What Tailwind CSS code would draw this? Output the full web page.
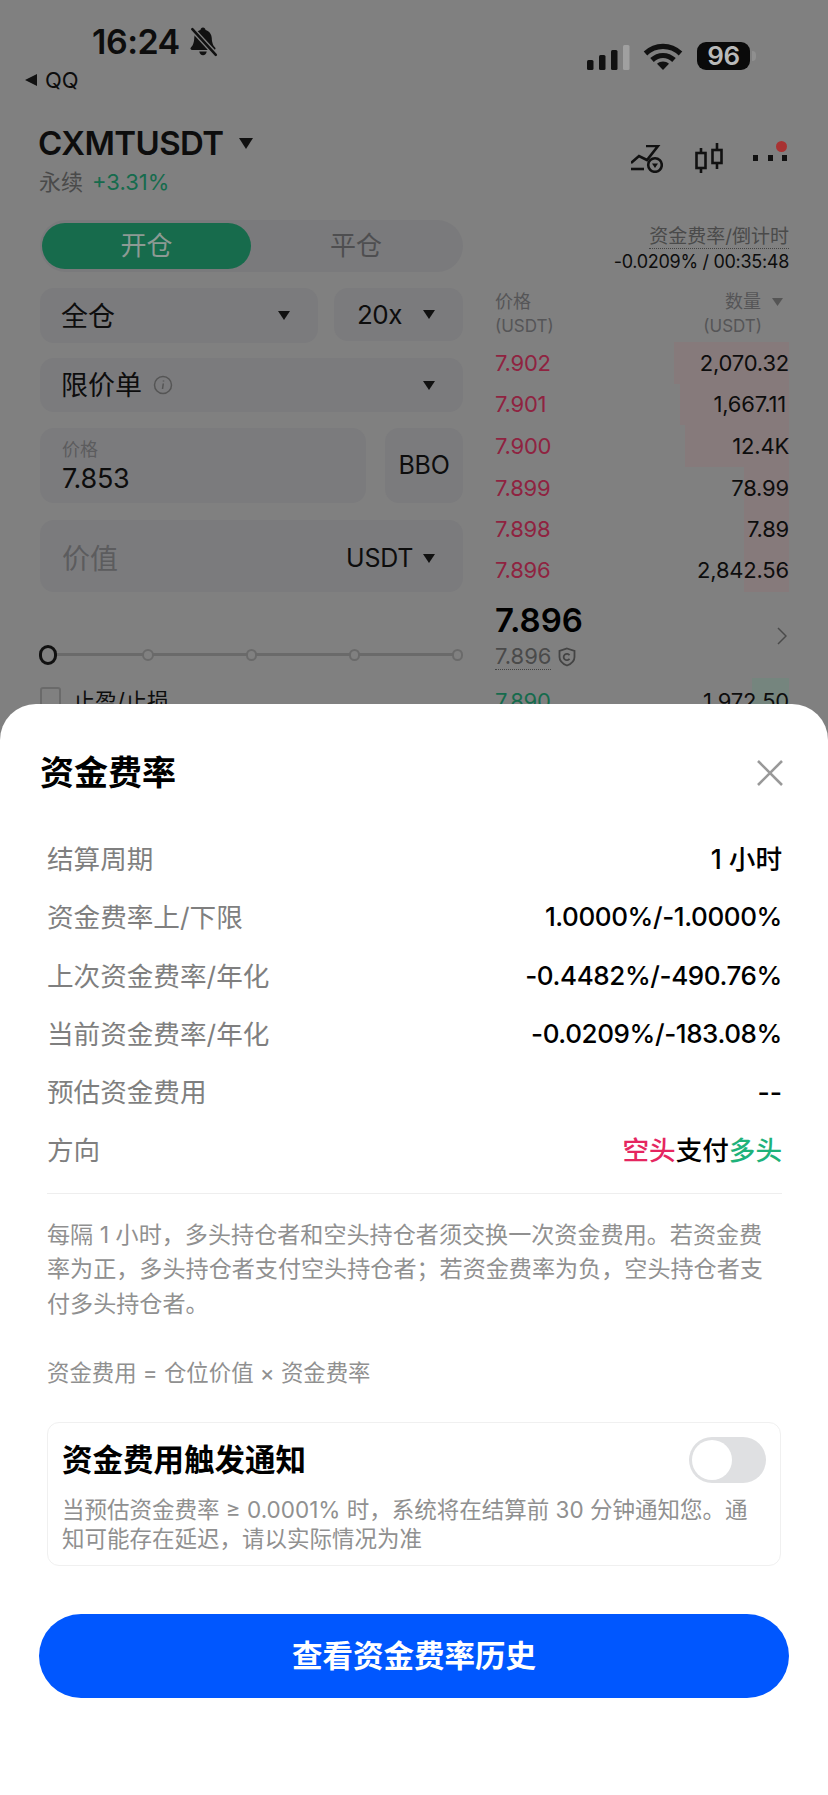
<!DOCTYPE html>
<html lang="en">

<head>
    <meta charset="UTF-8" />
    <title>CXMTUSDT</title>
    <script src="https://cdn.jsdelivr.net/npm/@tailwindcss/browser@4"></script>
</head>

<body class="bg-white text-black font-['Inter','Noto_Sans_CJK_SC',sans-serif]">
    <div class="w-[828px] h-[1795px] overflow-hidden flex flex-col bg-[#808080]">

        <!-- Dimmed trading page -->
        <div class="h-[704px] shrink-0 overflow-hidden text-[#0d0d0d]">
            <!-- Status bar -->
            <div class="h-[104px] flex justify-between">
                <div class="pt-[21px]">
                    <div class="pl-[92px] h-[42px] flex items-center gap-[7px]">
                        <span class="text-[34px] font-semibold leading-none tracking-[-0.5px]">16:24</span>
                        <svg width="32" height="32" viewBox="0 0 30 30" fill="#111">
                            <path d="M15 1.500c1.400 0 2.200 1 2.400 2.200 3.600 1 5.600 4 5.800 7.600.2 4.600 1.200 6.800 3.300 9.200.6.800.2 1.900-1 1.900H4.500c-1.200 0-1.600-1.100-1-1.900 2.100-2.400 3.100-4.600 3.300-9.200.2-3.600 2.200-6.600 5.800-7.600.2-1.200 1-2.200 2.400-2.200z" />
                            <path d="M11.500 24h7c-.3 2-1.700 3.500-3.500 3.500s-3.200-1.500-3.500-3.500z" />
                            <path d="M5 3 27 27" stroke="#808080" stroke-width="5" />
                            <path d="M5 3 27 27" stroke="#111" stroke-width="2.400" stroke-linecap="round" />
                        </svg>
                    </div>
                    <div class="pl-[24px] h-[26px] mt-[4px] flex items-center gap-[7px]">
                        <svg width="14" height="14" viewBox="0 0 14 14" fill="#111"><path d="M13 1v12L1 7z" /></svg>
                        <span class="text-[22px] leading-none">QQ</span>
                    </div>
                </div>
                <div class="pt-[42px] pr-[72px] h-[70px] flex items-start">
                    <svg class="mt-[2px]" width="44" height="26" viewBox="0 0 44 26" fill="#111">
                        <rect x="0" y="16" width="6.500" height="10" rx="1.500" />
                        <rect x="12" y="11" width="6.500" height="15" rx="1.500" />
                        <rect x="24" y="6" width="6.500" height="20" rx="1.500" />
                        <rect x="36" y="1" width="6.500" height="25" rx="1.500" fill="#a0a0a0" />
                    </svg>
                    <svg class="ml-[12px] mt-[1px]" width="40" height="28" viewBox="0 0 40 28" fill="none" stroke="#111" stroke-width="5.200">
                        <path d="M2.500 10.500c10-9.500 25-9.500 35 0" />
                        <path d="M9 17c6.500-6 15.500-6 22 0" />
                        <path d="M20 27l-6-6.200c3.500-3 8.500-3 12 0z" fill="#111" stroke="none" />
                    </svg>
                    <div class="ml-[14px] w-[53px] h-[28px] rounded-[9px] bg-[#0a0a0a] flex items-center justify-center text-[#b9b9b9] text-[26px] font-semibold leading-none tracking-[-0.5px]">96</div>
                    <div class="ml-[2px] mt-[9px] w-[4px] h-[10px] rounded-r bg-[#8f8f8f]"></div>
                </div>
            </div>

            <!-- Symbol header -->
            <div class="h-[116px] pl-[38px] pr-[41px] flex justify-between">
                <div>
                    <div class="h-[40px] mt-[19px] flex items-center">
                        <span class="text-[33px] font-semibold leading-none tracking-[-0.6px]">CXMTUSDT</span>
                        <svg class="ml-[16px]" width="14" height="11" viewBox="0 0 14 11" fill="#111"><path d="M0 0h14L7 11z" /></svg>
                    </div>
                    <div class="h-[28px] mt-[5px] pl-[1px] flex items-center gap-[9px] text-[22px] leading-none">
                        <span class="text-[#4a4a4a]">永续</span>
                        <span class="text-[#166b4d] text-[22px]">+3.31%</span>
                    </div>
                </div>
                <div class="pt-[36px] flex items-start">
                    <svg class="mt-[5px]" width="32" height="28" viewBox="0 0 32 28" fill="none" stroke="#111" stroke-width="2.600">
                        <path d="M0 18 8 11l8 4L27 1H15" />
                        <path d="M0 24h13" />
                        <circle cx="24" cy="20" r="6.800" />
                        <path d="M21 18.500h6L24 23z" fill="#111" stroke="none" />
                    </svg>
                    <svg class="ml-[32px] mt-[3px]" width="28" height="30" viewBox="0 0 28 30" fill="none" stroke="#111" stroke-width="2.600">
                        <path d="M6 5v5M6 25v5M22 0v7M22 20v6" />
                        <rect x="1.500" y="10" width="9" height="15" />
                        <rect x="17.500" y="7" width="9" height="13" />
                    </svg>
                    <div class="relative ml-[30px] w-[34px] h-[34px]">
                        <div class="flex justify-between pt-[15px]">
                            <span class="w-[5px] h-[6px] bg-[#111]"></span>
                            <span class="w-[5px] h-[6px] bg-[#111]"></span>
                            <span class="w-[5px] h-[6px] bg-[#111]"></span>
                        </div>
                        <span class="absolute right-0 top-[1px] w-[11px] h-[11px] rounded-full bg-[#a83232]"></span>
                    </div>
                </div>
            </div>

            <!-- Order form + order book -->
            <div class="pl-[40px] flex">
                <div class="w-[423px] shrink-0">
                    <div class="h-[52px] rounded-full bg-[#7a7a7c] flex items-center text-[26px] leading-none pl-[2px]">
                        <div class="w-[209px] h-[46px] rounded-full bg-[#176b4c] text-[#8d9a94] flex items-center justify-center">开仓</div>
                        <div class="w-[210px] text-center text-[#4e4e50]">平仓</div>
                    </div>
                    <div class="mt-[16px] flex gap-[16px]">
                        <div class="w-[278px] h-[55px] rounded-[14px] bg-[#7b7b7d] flex items-center justify-between pl-[21px] pr-[28px] text-[27px]">
                            <span class="pt-[3px]">全仓</span>
                            <svg width="12" height="9" viewBox="0 0 12 9" fill="#111"><path d="M0 0h12L6 9z" /></svg>
                        </div>
                        <div class="w-[129px] h-[53px] rounded-[14px] bg-[#7b7b7d] flex items-center justify-between pl-[23px] pr-[28px] text-[26px]">
                            <span class="tracking-[-0.5px]">20x</span>
                            <svg width="12" height="9" viewBox="0 0 12 9" fill="#111"><path d="M0 0h12L6 9z" /></svg>
                        </div>
                    </div>
                    <div class="mt-[15px] h-[54px] rounded-[14px] bg-[#7b7b7d] flex items-center pl-[21px] pr-[28px] text-[27px]">
                        <span class="pt-[3px]">限价单</span>
                        <svg class="ml-[11px]" width="20" height="20" viewBox="0 0 20 20" fill="none" stroke="#555" stroke-width="1.500">
                            <circle cx="10" cy="10" r="8.500" />
                            <path d="M10.300 8.500 9.500 14M10.500 5.500v1" />
                        </svg>
                        <svg class="ml-auto" width="12" height="9" viewBox="0 0 12 9" fill="#111"><path d="M0 0h12L6 9z" /></svg>
                    </div>
                    <div class="mt-[16px] flex gap-[19px]">
                        <div class="w-[326px] h-[75px] rounded-[14px] bg-[#7b7b7d] pl-[22px] pt-[9px]">
                            <div class="text-[18px] leading-[26px] text-[#5c5c5e]">价格</div>
                            <div class="text-[27px] leading-[32px] tracking-[-0.3px]">7.853</div>
                        </div>
                        <div class="w-[78px] h-[75px] rounded-[14px] bg-[#7b7b7d] flex items-center justify-center text-[25px] tracking-[-0.3px] pt-[1px]">BBO</div>
                    </div>
                    <div class="mt-[17px] h-[72px] rounded-[14px] bg-[#7b7b7d] flex items-center pl-[22px] pr-[28px] pt-[5px]">
                        <span class="text-[28px] text-[#5c5c5e]">价值</span>
                        <span class="ml-auto text-[25px] tracking-[-0.3px]">USDT</span>
                        <svg class="ml-[10px]" width="12" height="9" viewBox="0 0 12 9" fill="#111"><path d="M0 0h12L6 9z" /></svg>
                    </div>
                    <!-- Leverage slider -->
                    <div class="relative mt-[53px] h-[20px] -ml-[1px]">
                        <div class="absolute left-[8px] right-[2px] top-[8px] h-[3px] bg-[#6a6a6a]"></div>
                        <div class="relative flex items-center h-[20px] gap-[92px]">
                            <span class="w-[20px] h-[20px] rounded-full border-[3px] border-[#111] bg-[#808080] -mr-[7px]"></span>
                            <span class="w-[12px] h-[12px] rounded-full border-2 border-[#6a6a6a] bg-[#808080]"></span>
                            <span class="w-[12px] h-[12px] rounded-full border-2 border-[#6a6a6a] bg-[#808080]"></span>
                            <span class="w-[12px] h-[12px] rounded-full border-2 border-[#6a6a6a] bg-[#808080]"></span>
                            <span class="w-[12px] h-[12px] rounded-full border-2 border-[#6a6a6a] bg-[#808080]"></span>
                        </div>
                    </div>
                    <div class="mt-[22px] flex items-start gap-[12px]">
                        <span class="w-[21px] h-[21px] rounded-[3px] border-2 border-[#6a6a6a]"></span>
                        <span class="text-[22px] leading-[28px]">止盈/止损</span>
                    </div>
                </div>

                <div class="ml-[32px] w-[294px] shrink-0">
                    <div class="h-[56px] pt-[4px] text-right">
                        <div class="text-[19px] leading-[26px] text-[#4a4a4a]"><span class="border-b border-dotted border-[#444]">资金费率/倒计时</span></div>
                        <div class="text-[18px] leading-[24px] tracking-[-0.3px]">-0.0209% / 00:35:48</div>
                    </div>
                    <div class="h-[66px] pt-[14px] flex justify-between text-[#555557] text-[18px] leading-[24px]">
                        <div>
                            <div>价格</div>
                            <div class="text-[17px]">(USDT)</div>
                        </div>
                        <div class="text-right">
                            <div class="flex items-center justify-end gap-[11px]">
                                <span>数量</span>
                                <svg class="mr-[6px]" width="11" height="8" viewBox="0 0 11 8" fill="#555"><path d="M0 0h11L5.500 8z" /></svg>
                            </div>
                            <div class="text-[17px] pr-[27px]">(USDT)</div>
                        </div>
                    </div>
                    <div class="text-[22px] tracking-[-0.2px]">
                        <div class="relative h-[42px] flex items-center justify-between">
                            <div class="absolute right-0 top-0 bottom-0 w-[115px] bg-[#867a7b]"></div>
                            <span class="relative text-[#8f2340]">7.902</span><span class="relative">2,070.32</span>
                        </div>
                        <div class="relative h-[41px] flex items-center justify-between">
                            <div class="absolute right-0 top-0 bottom-0 w-[109px] bg-[#867a7b]"></div>
                            <span class="relative text-[#8f2340]">7.901</span><span class="relative pr-[3px]">1,667.11</span>
                        </div>
                        <div class="relative h-[42px] flex items-center justify-between pt-[1px]">
                            <div class="absolute right-0 top-0 bottom-0 w-[104px] bg-[#867a7b]"></div>
                            <span class="relative text-[#8f2340]">7.900</span><span class="relative">12.4K</span>
                        </div>
                        <div class="relative h-[41px] flex items-center justify-between pt-[1px]">
                            <div class="absolute right-0 top-0 bottom-0 w-[45px] bg-[#867a7b]"></div>
                            <span class="relative text-[#8f2340]">7.899</span><span class="relative">78.99</span>
                        </div>
                        <div class="relative h-[41px] flex items-center justify-between pt-[1px]">
                            <div class="absolute right-0 top-0 bottom-0 w-[45px] bg-[#867a7b]"></div>
                            <span class="relative text-[#8f2340]">7.898</span><span class="relative">7.89</span>
                        </div>
                        <div class="relative h-[43px] flex items-center justify-between">
                            <div class="absolute right-0 top-0 bottom-0 w-[45px] bg-[#867a7b]"></div>
                            <span class="relative text-[#8f2340]">7.896</span><span class="relative">2,842.56</span>
                        </div>
                    </div>
                    <div class="h-[86px] flex justify-between items-center">
                        <div>
                            <div class="text-[33px] leading-[44px] font-semibold text-black -mt-[2px]">7.896</div>
                            <div class="flex items-center gap-[7px] mt-[1px]">
                                <span class="text-[22px] leading-[26px] text-[#4a4a4a] border-b border-dotted border-[#444]">7.896</span>
                                <svg width="18" height="20" viewBox="0 0 18 20" fill="none" stroke="#444" stroke-width="1.800">
                                    <path d="M9 1.500 16.500 4v6c0 4-3.500 7-7.500 8.500C5 17 1.500 14 1.500 10V4z" />
                                    <path d="M11.500 8.200a3.200 3.200 0 1 0 0 3.600" />
                                </svg>
                            </div>
                        </div>
                        <svg class="mr-[2px] mt-[2px]" width="10" height="18" viewBox="0 0 10 18" fill="none" stroke="#4a4a4a" stroke-width="1.500"><path d="M1 1l8 8-8 8" /></svg>
                    </div>
                    <div class="relative h-[46px] flex items-center justify-between text-[22px] tracking-[-0.2px]">
                        <div class="absolute right-0 top-0 bottom-0 w-[37px] bg-[#75857e]"></div>
                        <span class="relative text-[#166b4d]">7.890</span><span class="relative">1,972.50</span>
                    </div>
                </div>
            </div>
        </div>

        <!-- Funding rate sheet -->
        <div class="flex-1 bg-white rounded-t-[36px] pt-[48px] pl-[47px] pr-[46px]">
            <div class="-ml-[7px] h-[42px] flex items-center justify-between">
                <h2 class="text-[34px] font-bold leading-none">资金费率</h2>
                <svg class="-mr-[2px]" width="28" height="28" viewBox="0 0 28 28" fill="none" stroke="#999999" stroke-width="2.600"><path d="M2 2l24 24M26 2 2 26" /></svg>
            </div>

            <div class="mt-[36px] text-[26.600px] leading-[58.300px]">
                <div class="flex justify-between"><span class="text-[#7f7f7f]">结算周期</span><span class="font-medium">1 小时</span></div>
                <div class="flex justify-between"><span class="text-[#7f7f7f]">资金费率上/下限</span><span class="font-medium text-[26px] tracking-[-0.4px]">1.0000%/-1.0000%</span></div>
                <div class="flex justify-between"><span class="text-[#7f7f7f]">上次资金费率/年化</span><span class="font-medium text-[26px] tracking-[-0.4px]">-0.4482%/-490.76%</span></div>
                <div class="flex justify-between"><span class="text-[#7f7f7f]">当前资金费率/年化</span><span class="font-medium text-[26px] tracking-[-0.4px]">-0.0209%/-183.08%</span></div>
                <div class="flex justify-between"><span class="text-[#7f7f7f]">预估资金费用</span><span class="font-medium">--</span></div>
                <div class="flex justify-between"><span class="text-[#7f7f7f]">方向</span><span class="font-medium"><span class="text-[#e5265f]">空头</span>支付<span class="text-[#1eb27a]">多头</span></span></div>
            </div>

            <div class="mt-[13px] border-t border-[#eeeeee]"></div>

            <div class="mt-[24px] text-[23.100px] leading-[34.500px] text-[#909090]">
                <p>每隔 1 小时，多头持仓者和空头持仓者须交换一次资金费用。若资金费<br />率为正，多头持仓者支付空头持仓者；若资金费率为负，空头持仓者支<br />付多头持仓者。</p>
                <p class="mt-[35px] text-[22.400px]">资金费用 = 仓位价值 × 资金费率</p>
            </div>

            <div class="mt-[31px] mr-[1px] h-[144px] rounded-[12px] border border-[#f0f0f0] px-[14px] pt-[14px]">
                <div class="h-[46px] flex items-center justify-between">
                    <span class="text-[30.500px] font-semibold leading-none">资金费用触发通知</span>
                    <div class="w-[77px] h-[46px] rounded-full bg-[#dfe0e2] p-[3px]">
                        <div class="w-[40px] h-[40px] rounded-full bg-white"></div>
                    </div>
                </div>
                <p class="mt-[12px] text-[22.500px] leading-[29px] text-[#909090]">当预估资金费率 ≥ 0.0001% 时，系统将在结算前 30 分钟通知您。通<br />知可能存在延迟，请以实际情况为准</p>
            </div>

            <div class="-ml-[8px] -mr-[7px] mt-[48px] h-[84px] rounded-full bg-[#0057ff] flex items-center justify-center text-white text-[30.500px] font-semibold">查看资金费率历史</div>
        </div>
    </div>
</body>

</html>
